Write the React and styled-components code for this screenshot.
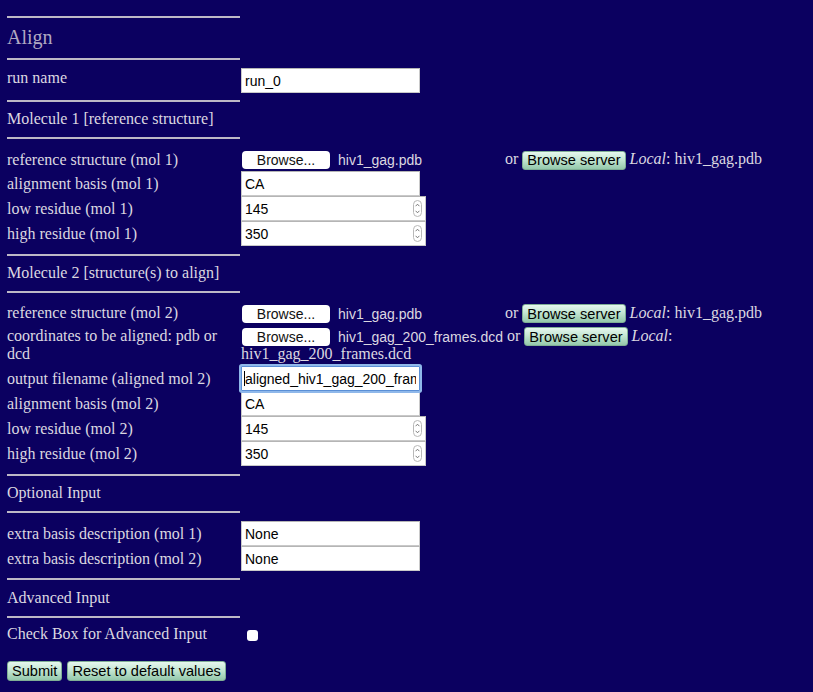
import React from "react";
import styled, { createGlobalStyle, css } from "styled-components";

const Global = createGlobalStyle`
  html, body { margin: 0; padding: 0; background: #0b0060; }
  body { font-family: "Liberation Serif", "Times New Roman", serif; font-size: 16px; color: #dcd8e0; }
`;

const Page = styled.div`
  padding: 16px 8px 10px 7px;
  box-sizing: border-box;
  width: 813px;
`;

const Form = styled.form`
  display: flex;
  flex-direction: column;
  margin: 0;
`;

const Rule = styled.div`
  width: 233px;
  height: 2px;
  background: #bdb8c6;
  margin-top: ${(p) => p.$mt || 0}px;
  margin-bottom: ${(p) => p.$mb || 0}px;
`;

const Title = styled.h3`
  margin: 0;
  height: 40px;
  display: flex;
  align-items: center;
  font-weight: normal;
  font-size: 20px;
  color: #b0a9c2;
  padding-bottom: 2px;
  box-sizing: border-box;
`;

const Section = styled.div`
  height: ${(p) => p.$h || 35}px;
  display: flex;
  align-items: center;
  line-height: 18px;
  padding-bottom: 1px;
  box-sizing: border-box;
`;

const Row = styled.div`
  display: grid;
  grid-template-columns: 234px 1fr;
  align-items: center;
  min-height: ${(p) => p.$h || 25}px;
  line-height: 18px;
`;

const Label = styled.div`
  padding-right: 10px;
  padding-bottom: ${(p) => p.$pb || 0}px;
`;

const Value = styled.div`
  line-height: 18px;
`;

const sans = css`
  font-family: "Liberation Sans", Arial, Helvetica, sans-serif;
  font-size: 14px;
`;

const TextInput = styled.input`
  ${sans}
  display: block;
  box-sizing: border-box;
  width: ${(p) => p.$w || 179}px;
  height: 25px;
  margin: 0;
  padding: 1px 3px 0;
  color: #000;
  background: #fff;
  border: 1px solid #c9c9c9;
  border-top-color: #b5b5b5;
  outline: none;
  border-radius: 0;
  ${(p) =>
    p.$focused &&
    css`
      border: 1px solid #5a8fd6;
      box-shadow: 0 0 0 2px #8fb8ea;
      border-radius: 1px;
    `}
`;

const FieldWrap = styled.div`
  position: relative;
  width: ${(p) => p.$w || 179}px;
`;

const Caret = styled.span`
  position: absolute;
  left: 3px;
  top: 5px;
  width: 1px;
  height: 15px;
  background: #000;
`;

const Spinner = styled.svg`
  position: absolute;
  right: 4px;
  top: 4px;
  width: 9px;
  height: 17px;
`;

const FileField = styled.span`
  display: inline-flex;
  align-items: center;
  min-width: 259px;
  vertical-align: middle;
  margin: -1px 0 -1px 1px;
`;

const FileButton = styled.span`
  ${sans}
  display: inline-flex;
  align-items: center;
  justify-content: center;
  width: 88px;
  height: 18px;
  background: #fff;
  color: #111;
  border-radius: 4px;
  line-height: 18px;
`;

const FileName = styled.span`
  ${sans}
  color: #dcd8e0;
  margin-left: 8px;
  white-space: nowrap;
`;

const GreenButton = styled.button`
  font-family: "Liberation Sans", Arial, Helvetica, sans-serif;
  font-size: 14.6px;
  display: inline-flex;
  align-items: center;
  height: ${(p) => p.$h || 19}px;
  padding: 0 4px;
  margin: -1px 0;
  color: #000;
  border: 1px solid #7fae95;
  border-radius: 3px;
  background: linear-gradient(#e6f7ee 0%, #c4e6d3 45%, #94c8ab 100%);
  vertical-align: middle;
  cursor: pointer;
  line-height: 1;
`;

const Local = styled.i``;

const CheckBox = styled.input`
  appearance: none;
  -webkit-appearance: none;
  width: 11px;
  height: 11px;
  margin: 0 0 0 6px;
  background: #fff;
  border-radius: 3px;
  border: none;
  display: block;
`;

const Buttons = styled.div`
  display: flex;
  gap: 5px;
  margin-top: 10px;
`;

function SpinnerIcon() {
  return (
    <Spinner viewBox="0 0 9 17">
      <rect x="0.5" y="0.5" width="8" height="16" rx="4" fill="#fff" stroke="#b8b8b8" />
      <path d="M2.6 6.2 L4.5 4.2 L6.4 6.2" fill="none" stroke="#6c6c6c" strokeWidth="0.9" />
      <path d="M2.6 10.8 L4.5 12.8 L6.4 10.8" fill="none" stroke="#6c6c6c" strokeWidth="0.9" />
    </Spinner>
  );
}

function NumberInput({ value }) {
  return (
    <FieldWrap $w={185}>
      <TextInput $w={185} defaultValue={value} />
      <SpinnerIcon />
    </FieldWrap>
  );
}

function FocusedInput({ value }) {
  return (
    <FieldWrap>
      <TextInput $focused defaultValue={value} />
      <Caret />
    </FieldWrap>
  );
}

function FileRow({ label, file, local, h }) {
  return (
    <Row $h={h}>
      <Label>{label}</Label>
      <Value>
        <FileField>
          <FileButton>Browse...</FileButton>
          <FileName>{file}</FileName>
        </FileField>{" "}
        or <GreenButton type="button">Browse server</GreenButton> <Local>Local</Local>: {local}
      </Value>
    </Row>
  );
}

export default function App() {
  return (
    <Page>
      <Global />
      <Form onSubmit={(e) => e.preventDefault()}>
        <Rule />
        <Title>Align</Title>
        <Rule />
        <Row $h={40}>
          <Label $pb={4}>run name</Label>
          <TextInput defaultValue="run_0" />
        </Row>
        <Rule />
        <Section>Molecule 1 [reference structure]</Section>
        <Rule $mb={9} />

        <FileRow label="reference structure (mol 1)" file="hiv1_gag.pdb" local="hiv1_gag.pdb" h={23} />
        <Row>
          <Label>alignment basis (mol 1)</Label>
          <TextInput defaultValue="CA" />
        </Row>
        <Row>
          <Label>low residue (mol 1)</Label>
          <NumberInput value="145" />
        </Row>
        <Row>
          <Label>high residue (mol 1)</Label>
          <NumberInput value="350" />
        </Row>

        <Rule $mt={8} />
        <Section>Molecule 2 [structure(s) to align]</Section>
        <Rule $mb={9} />

        <FileRow label="reference structure (mol 2)" file="hiv1_gag.pdb" local="hiv1_gag.pdb" h={22} />
        <Row $h={42}>
          <Label>coordinates to be aligned: pdb or dcd</Label>
          <Value>
            <FileField>
              <FileButton>Browse...</FileButton>
              <FileName>hiv1_gag_200_frames.dcd</FileName>
            </FileField>{" "}
            or <GreenButton type="button">Browse server</GreenButton> <Local>Local</Local>: hiv1_gag_200_frames.dcd
          </Value>
        </Row>
        <Row>
          <Label>output filename (aligned mol 2)</Label>
          <FocusedInput value="aligned_hiv1_gag_200_frames.dcd" />
        </Row>
        <Row>
          <Label>alignment basis (mol 2)</Label>
          <TextInput defaultValue="CA" />
        </Row>
        <Row>
          <Label>low residue (mol 2)</Label>
          <NumberInput value="145" />
        </Row>
        <Row>
          <Label>high residue (mol 2)</Label>
          <NumberInput value="350" />
        </Row>

        <Rule $mt={8} />
        <Section>Optional Input</Section>
        <Rule $mb={8} />
        <Row>
          <Label>extra basis description (mol 1)</Label>
          <TextInput defaultValue="None" />
        </Row>
        <Row>
          <Label>extra basis description (mol 2)</Label>
          <TextInput defaultValue="None" />
        </Row>
        <Rule $mt={7} />
        <Section $h={36}>Advanced Input</Section>
        <Rule />
        <Row $h={34}>
          <Label $pb={2}>Check Box for Advanced Input</Label>
          <CheckBox type="checkbox" />
        </Row>
        <Buttons>
          <GreenButton type="submit" $h={20}>Submit</GreenButton>
          <GreenButton type="button" $h={20}>Reset to default values</GreenButton>
        </Buttons>
      </Form>
    </Page>
  );
}
